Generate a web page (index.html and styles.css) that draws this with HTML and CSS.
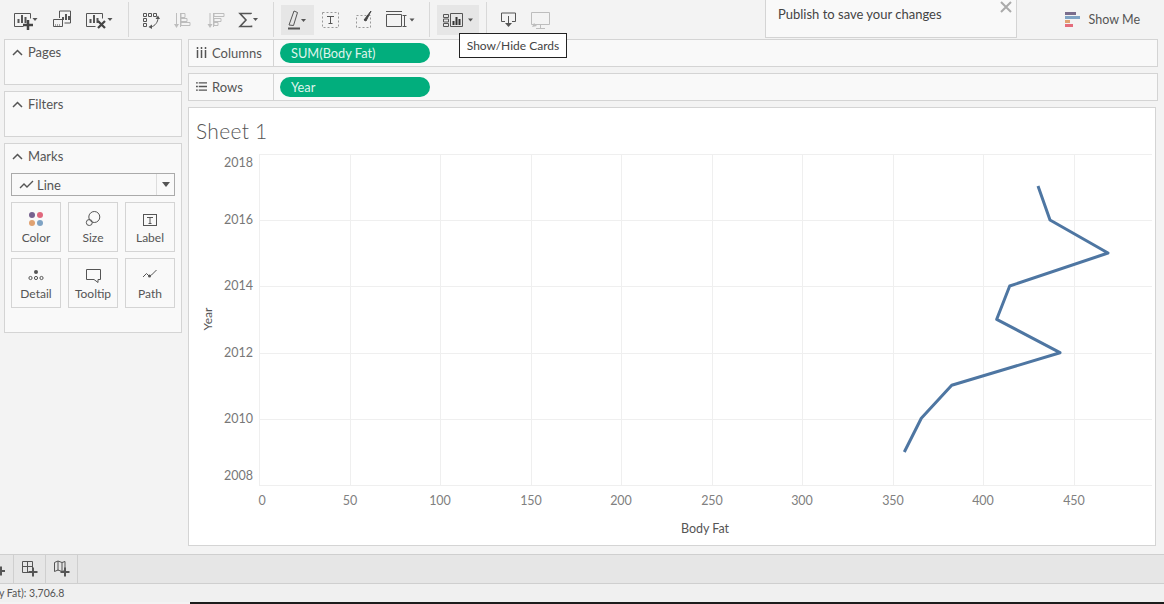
FILE: index.html
```html
<!DOCTYPE html>
<html lang="en">
<head>
<meta charset="utf-8">
<title>Sheet 1</title>
<link rel="stylesheet" href="styles.css">
</head>
<body>
<header class="toolbar">
  <div class="group g1">
    <svg class="slot s36" viewBox="8 5 36 30"><path class="ic" d="M14.500 13.500h16v5M14.500 13.500v13h9"/><path class="ic2" d="M18.500 23v-4M22 23v-8M25.500 23v-6"/><path class="plus" d="M28 20v10M23 25h10"/><path class="arr" d="M32.500 18h5l-2.500 3z"/></svg>
    <svg class="slot s36" viewBox="44 5 36 30"><path class="ic" d="M59.500 18v-7h11v12h-6"/><path class="ic2" d="M63 20v-3M66 20v-6M69 20v-4"/><path class="ic" d="M53.500 19.500h9v7h-9z"/><path class="ic" stroke-dasharray="1 1" d="M55 25h6"/></svg>
    <svg class="slot s40" viewBox="80 5 40 30"><path class="ic" d="M86.500 13.500h16v5M86.500 13.500v13h9"/><path class="ic2" d="M90.500 23v-4M94 23v-8M97.500 23v-5"/><path class="plus x" d="M98 21l7 7M105 21l-7 7"/><path class="arr" d="M107.500 18h5l-2.500 3z"/></svg>
  </div>
  <div class="group g2">
    <svg class="slot s33" viewBox="135 5 33 30"><path class="ic" d="M143.500 13.500h3v3h-3zM148.500 13.500h3v3h-3zM153.500 13.500h3v3h-3zM143.500 18.500h3v3h-3zM143.500 23.500h3v3h-3z"/><path class="ic" d="M158 18c0 4-3 8-7 9"/><path class="arr" d="M155.500 19l2.500-3.500 2 3.500zM152 24.500l-3.500 2.500 3.500 2z"/></svg>
    <svg class="slot s33" viewBox="168 5 33 30"><path class="off" d="M176.500 13v12M180.500 13v14M181 13.500h4v4h-4zM181 18.500h6v3h-6zM181 22.500h9v3h-9z"/><path class="offa" d="M174 24h5l-2.500 4z"/></svg>
    <svg class="slot s33" viewBox="201 5 33 30"><path class="off" d="M210 13v12M213.500 13v14M214 13.500h10v3h-10zM214 18.500h7v3h-7zM214 22.500h4v3h-4z"/><path class="offa" d="M207.500 24h5l-2.500 4z"/></svg>
    <svg class="slot s33" viewBox="234 5 33 30"><path class="sig" d="M251 14v-.500h-11l6 6.500-6 6.500h11.500v-1"/><path class="arr" d="M253 18h5l-2.500 3z"/></svg>
  </div>
  <div class="group g3">
    <div class="btn b33"><svg class="slot s33" viewBox="281 5 33 30"><path class="ic" d="M289 25l5-14 3.500 1.500-4 13z"/><path class="ic2" d="M288 28.500h12"/><path class="arr" d="M301 19h5l-2.500 3z"/></svg></div>
    <svg class="slot s33" viewBox="314 5 33 30"><path class="dash" d="M322.500 12.500h16v15h-16z"/><path class="ic" d="M327 16.500h7M330.500 16.500v7M328.500 23.500h4"/></svg>
    <svg class="slot s33" viewBox="347 5 33 30"><path class="dash" d="M356.500 15.500h14v12h-14z"/><path class="thick" d="M371 11l-5 10-2-1z"/></svg>
    <svg class="slot s41" viewBox="380 5 41 30"><path class="ic" d="M386.500 14.500h15v12h-15zM386 11.500h16M404.500 15v11M402.500 15.500h4M402.500 26.500h4"/><path class="arr" d="M409.500 18.500h5l-2.500 3z"/></svg>
  </div>
  <div class="group g4">
    <div class="btn b42"><svg class="slot s42" viewBox="437 5 42 30"><path class="ic" d="M443.500 14.500h5v3h-5zM443.500 19h5v3h-5zM443.500 23.500h5v3h-5zM450.500 13.500h12v13h-12z"/><path class="bars" d="M453.500 25v-4M456.500 25v-8M459.500 25v-6"/><path class="arr" d="M468 18.500h5l-2.500 3z"/></svg></div>
  </div>
  <div class="group g5">
    <svg class="slot s33" viewBox="492 5 33 30"><path class="ic" d="M505 21.500h-3.500v-8.500h14v8.500h-3.500"/><path class="ic" d="M508.500 16v8"/><path class="dark" d="M505 23h7l-3.500 4z"/></svg>
    <svg class="slot s33" viewBox="525 5 33 30"><path class="off" d="M531.500 12.500h18v12h-18zM540.500 24.500v4M536 28.500h9"/><path class="offa" d="M532 27l5-1-3-3z"/></svg>
  </div>
  <div class="showme">
    <svg class="showme-ic" viewBox="0 0 15 15"><rect x="0" y="0" width="11" height="3" fill="#7a6d8c"/><rect x="0" y="4" width="15" height="3" fill="#7fa3c4"/><rect x="0" y="8" width="5" height="3" fill="#e0a272"/><rect x="0" y="12" width="8" height="3" fill="#e46c7c"/></svg>
    <span>Show Me</span>
  </div>
</header>

<div class="publish">
  <span>Publish to save your changes</span>
  <svg class="close" viewBox="0 0 12 12"><path d="M1 1l10 10M11 1L1 11"/></svg>
</div>
<div class="tooltip">Show/Hide Cards</div>

<main class="main">
  <aside class="sidebar">
    <section class="panel small">
      <h2 class="panel-title"><svg class="chev" viewBox="0 0 11 7"><path d="M1 6l4.500-4.500L10 6"/></svg>Pages</h2>
    </section>
    <section class="panel small">
      <h2 class="panel-title"><svg class="chev" viewBox="0 0 11 7"><path d="M1 6l4.500-4.500L10 6"/></svg>Filters</h2>
    </section>
    <section class="panel marks">
      <h2 class="panel-title"><svg class="chev" viewBox="0 0 11 7"><path d="M1 6l4.500-4.500L10 6"/></svg>Marks</h2>
      <div class="select">
        <svg class="select-ic" viewBox="0 0 15 10"><path d="M1 8l4-4 3 3 6-6"/></svg>
        <span class="select-text">Line</span>
        <span class="select-arrow"><svg viewBox="0 0 8 5"><path d="M0 0h8L4 5z"/></svg></span>
      </div>
      <div class="tiles">
        <div class="tile">
          <svg class="tile-ic" viewBox="0 0 20 18"><circle cx="6" cy="6" r="3" fill="#76628f"/><circle cx="14" cy="6" r="3" fill="#e0687d"/><circle cx="6" cy="14" r="3" fill="#e0a272"/><circle cx="14" cy="14" r="3" fill="#7fa3c4"/></svg>
          <span>Color</span>
        </div>
        <div class="tile">
          <svg class="tile-ic line" viewBox="0 0 20 18"><circle cx="11.300" cy="8" r="5.500"/><circle cx="6.300" cy="13.500" r="3"/></svg>
          <span>Size</span>
        </div>
        <div class="tile">
          <svg class="tile-ic line" viewBox="0 0 20 18"><rect x="3.500" y="5.500" width="13" height="11"/><path d="M7 8.500h6M10 8.500v6M8.500 14.500h3"/></svg>
          <span>Label</span>
        </div>
        <div class="tile">
          <svg class="tile-ic line" viewBox="0 0 20 18"><circle class="fill" cx="10" cy="7" r="2"/><circle cx="4.500" cy="13" r="1.600"/><circle cx="10" cy="13" r="1.600"/><circle cx="15.500" cy="13" r="1.600"/></svg>
          <span>Detail</span>
        </div>
        <div class="tile">
          <svg class="tile-ic line" viewBox="0 0 20 18"><path d="M3.500 4.500h14v10h-2.500v3l-4-3h-7.500z"/></svg>
          <span>Tooltip</span>
        </div>
        <div class="tile">
          <svg class="tile-ic line" viewBox="0 0 20 18"><path d="M3 12l3.500-3.500 3 3 2-1.500 5-5"/><circle class="fill" cx="9.500" cy="11" r="1.500"/></svg>
          <span>Path</span>
        </div>
      </div>
    </section>
  </aside>

  <div class="content">
    <div class="shelf">
      <div class="shelf-label">
        <svg class="shelf-ic" viewBox="0 0 11 11"><path d="M1.500 3v8M5.500 3v8M9.500 3v8M1.500 0v2M5.500 0v2M9.500 0v2"/></svg>
        <span>Columns</span>
      </div>
      <div class="shelf-body"><div class="pill">SUM(Body Fat)</div></div>
    </div>
    <div class="shelf">
      <div class="shelf-label">
        <svg class="shelf-ic" viewBox="0 0 12 10"><path d="M0 1h2M3 1h9M0 5h2M3 5h9M0 9h2M3 9h9"/></svg>
        <span>Rows</span>
      </div>
      <div class="shelf-body"><div class="pill">Year</div></div>
    </div>
    <section class="sheet">
      <h1 class="sheet-title">Sheet 1</h1>
      <svg class="chart" viewBox="189 150 966 394">
        <g class="grid">
          <path d="M259.500 154v331M350.500 154v331M440.500 154v331M531.500 154v331M621.500 154v331M712.500 154v331M802.500 154v331M893.500 154v331M983.500 154v331M1074.500 154v331"/>
          <path d="M259 154.500h893M259 220.500h893M259 286.500h893M259 353.500h893M259 419.500h893M259 485.500h893"/>
        </g>
        <polyline class="series" points="1038,186 1050,220 1108,253 1009.700,286 996.700,319.300 1060,352.700 951.700,385.300 921.300,418.300 904.300,452"/>
        <g class="ylab">
          <text x="253" y="167">2018</text>
          <text x="253" y="224">2016</text>
          <text x="253" y="290">2014</text>
          <text x="253" y="357">2012</text>
          <text x="253" y="423">2010</text>
          <text x="253" y="480">2008</text>
        </g>
        <g class="xlab">
          <text x="262" y="505">0</text>
          <text x="350" y="505">50</text>
          <text x="440" y="505">100</text>
          <text x="531" y="505">150</text>
          <text x="621" y="505">200</text>
          <text x="712" y="505">250</text>
          <text x="802" y="505">300</text>
          <text x="893" y="505">350</text>
          <text x="983" y="505">400</text>
          <text x="1074" y="505">450</text>
        </g>
        <text class="axis-title" x="705" y="533">Body Fat</text>
        <text class="axis-title side" transform="translate(212 319) rotate(-90)">Year</text>
      </svg>
    </section>
  </div>
</main>

<nav class="tabs">
  <div class="tab t1"><svg class="tab-ic" viewBox="0 0 13 28"><path class="tab-plus" d="M0 16h5M1 11.500v9"/></svg></div>
  <div class="tab t2"><svg class="tab-ic" viewBox="0 0 31 28"><path class="ic" d="M8.500 6.500h10v11h-10zM8.500 11.500h10M13.500 6.500v11"/><path class="tab-plus" d="M14.500 17h9M19 12.500v9"/></svg></div>
  <div class="tab t3"><svg class="tab-ic" viewBox="0 0 31 28"><path class="ic" d="M8.500 7.500l3.500-1.500 4 1.500 3 -1v9l-3 1-4-1.500-3.500 1.500zM12 6v9.500M16 7.500v9"/><path class="tab-plus" d="M14.500 17h9M19 12.500v9"/></svg></div>
</nav>
<footer class="status">y Fat): 3,706.8</footer>
<div class="strip"></div>
</body>
</html>
```
FILE: styles.css
```css
* { box-sizing: border-box; }
html, body { margin: 0; padding: 0; }
body {
  width: 1164px;
  height: 604px;
  overflow: hidden;
  position: relative;
  background: #f3f3f3;
  color: #555;
  font-family: Lato, "Open Sans", sans-serif;
  font-size: 13px;
}

/* toolbar */
.toolbar { height: 39px; display: flex; align-items: flex-start; }
.group { display: flex; height: 35px; margin-top: 2px; padding-top: 3px; align-items: flex-start; border-right: 1px solid #d8d8d8; }
.g1 { width: 129px; padding-left: 8px; }
.g2 { width: 145px; padding-left: 6px; }
.g3 { width: 156px; padding-left: 7px; }
.g4 { width: 57px; padding-left: 7px; }
.g5 { border-right: 0; padding-left: 5px; }
.slot { display: block; height: 30px; flex: none; }
.s33 { width: 33px; }
.s36 { width: 36px; }
.s40 { width: 40px; }
.s41 { width: 41px; }
.s42 { width: 42px; }
.btn { background: #e6e6e6; height: 30px; flex: none; }
.b33 { width: 33px; }
.b42 { width: 42px; }
.ic, .dash, .off, .sig { fill: none; stroke: #555; stroke-width: 1; }
.ic2 { fill: none; stroke: #555; stroke-width: 2; }
.bars { fill: none; stroke: #333; stroke-width: 2; }
.plus { fill: none; stroke: #444; stroke-width: 2.500; }
.plus.x { stroke-width: 2.200; }
.arr, .dark { fill: #555; }
.off { stroke: #bdbdbd; }
.offa { fill: #bdbdbd; }
.sig { stroke-width: 1.600; }
.dash { stroke: #999; stroke-dasharray: 2 2; }
.thick { fill: #444; stroke: #444; stroke-width: 1; }
.showme { margin-left: auto; margin-right: 24px; margin-top: 12px; display: flex; align-items: center; gap: 9px; font-size: 12.500px; color: #555; }
.showme-ic { width: 15px; height: 15px; display: block; }

/* overlays */
.publish {
  position: absolute; left: 765px; top: -1px; width: 252px; height: 39px;
  background: #f9f9f9; border: 1px solid #d4d4d4;
  padding: 6px 12px; font-size: 13px; color: #444;
}
.close { position: absolute; right: 4px; top: 1px; width: 12px; height: 12px; fill: none; stroke: #aaa; stroke-width: 2; }
.tooltip {
  position: absolute; left: 459px; top: 33px; width: 108px; height: 25px;
  background: #fff; border: 1px solid #222;
  font-size: 12px; line-height: 23px; text-align: center; color: #444;
}

/* layout */
.main { height: 515px; display: flex; gap: 6px; padding-left: 4px; }
.sidebar { width: 178px; flex: none; display: flex; flex-direction: column; gap: 6px; }
.content { width: 970px; flex: none; display: flex; flex-direction: column; gap: 6px; }

/* panels */
.panel { background: #f9f9f9; border: 1px solid #d4d4d4; }
.panel.small { height: 46px; }
.panel.marks { height: 190px; padding: 0 6px; }
.panel-title { margin: 0; height: 24px; display: flex; align-items: center; gap: 5px; padding: 0 0 0 7px; font-size: 13px; font-weight: 400; color: #555; }
.marks .panel-title { padding-left: 1px; }
.chev { width: 11px; height: 7px; fill: none; stroke: #555; stroke-width: 1.500; flex: none; }
.select { height: 23px; margin-top: 5px; display: flex; align-items: center; border: 1px solid #aaa; background: #f9f9f9; color: #555; }
.select-ic { width: 15px; height: 10px; margin-left: 7px; fill: none; stroke: #555; stroke-width: 1.400; flex: none; }
.select-text { margin-left: 3px; flex: 1; }
.select-arrow { width: 18px; height: 100%; border-left: 1px solid #ddd; display: flex; align-items: center; justify-content: center; }
.select-arrow svg { width: 8px; height: 5px; fill: #555; }
.tiles { display: grid; grid-template-columns: repeat(3, 50px); grid-auto-rows: 50px; gap: 6px 7px; margin-top: 6px; }
.tile { border: 1px solid #d4d4d4; display: flex; flex-direction: column; align-items: center; padding-top: 6px; font-size: 12px; color: #555; }
.tile-ic { width: 20px; height: 18px; display: block; margin-bottom: 3px; flex: none; }
.tile-ic.line { fill: none; stroke: #555; stroke-width: 1; }
.tile-ic .fill { fill: #555; stroke: none; }

/* shelves */
.shelf { height: 28px; display: flex; background: #f9f9f9; border: 1px solid #d4d4d4; flex: none; }
.shelf-label { width: 85px; display: flex; align-items: center; gap: 5px; padding: 0 0 1px 7px; border-right: 1px solid #d4d4d4; color: #555; flex: none; }
.shelf-ic { width: 11px; height: 11px; fill: none; stroke: #555; stroke-width: 1.500; flex: none; }
.shelf-body { padding: 3px 0 0 6px; }
.pill { width: 150px; height: 20px; border-radius: 10px; background: #02ae7d; color: #dff4ec; font-size: 12.800px; line-height: 20px; padding-left: 11px; }

/* sheet */
.sheet { width: 968px; height: 439px; background: #fff; border: 1px solid #d4d4d4; flex: none; }
.sheet-title { margin: 0; height: 42px; padding: 11px 0 0 7px; font-size: 21px; line-height: 24px; font-weight: 300; color: #555; letter-spacing: .3px; }
.chart { display: block; width: 966px; height: 394px; }
.grid path { fill: none; stroke: #efefef; stroke-width: 1; }
.series { fill: none; stroke: #4e76a2; stroke-width: 3; stroke-linejoin: round; }
.ylab text { font-family: Lato, sans-serif; font-size: 12.500px; fill: #777; text-anchor: end; }
.xlab text { font-family: Lato, sans-serif; font-size: 12.500px; fill: #808080; text-anchor: middle; }
.axis-title { font-family: Lato, sans-serif; font-size: 12.500px; fill: #555; text-anchor: middle; }
.axis-title.side { font-size: 12px; }

/* bottom */
.tabs { height: 30px; display: flex; background: #e6e6e6; border-top: 1px solid #cfcfcf; border-bottom: 1px solid #cfcfcf; }
.tab { height: 100%; border-right: 1px solid #cfcfcf; flex: none; }
.t1 { width: 14px; }
.t2, .t3 { width: 32px; }
.tab-ic { display: block; width: 100%; height: 28px; }
.tab-plus { fill: none; stroke: #555; stroke-width: 2; }
.status { height: 18px; background: #f0f0f0; font-size: 10.500px; line-height: 19px; color: #555; white-space: nowrap; text-indent: -1px; }
.strip { height: 2px; margin-left: 190px; background: #1c1c1c; }
```
